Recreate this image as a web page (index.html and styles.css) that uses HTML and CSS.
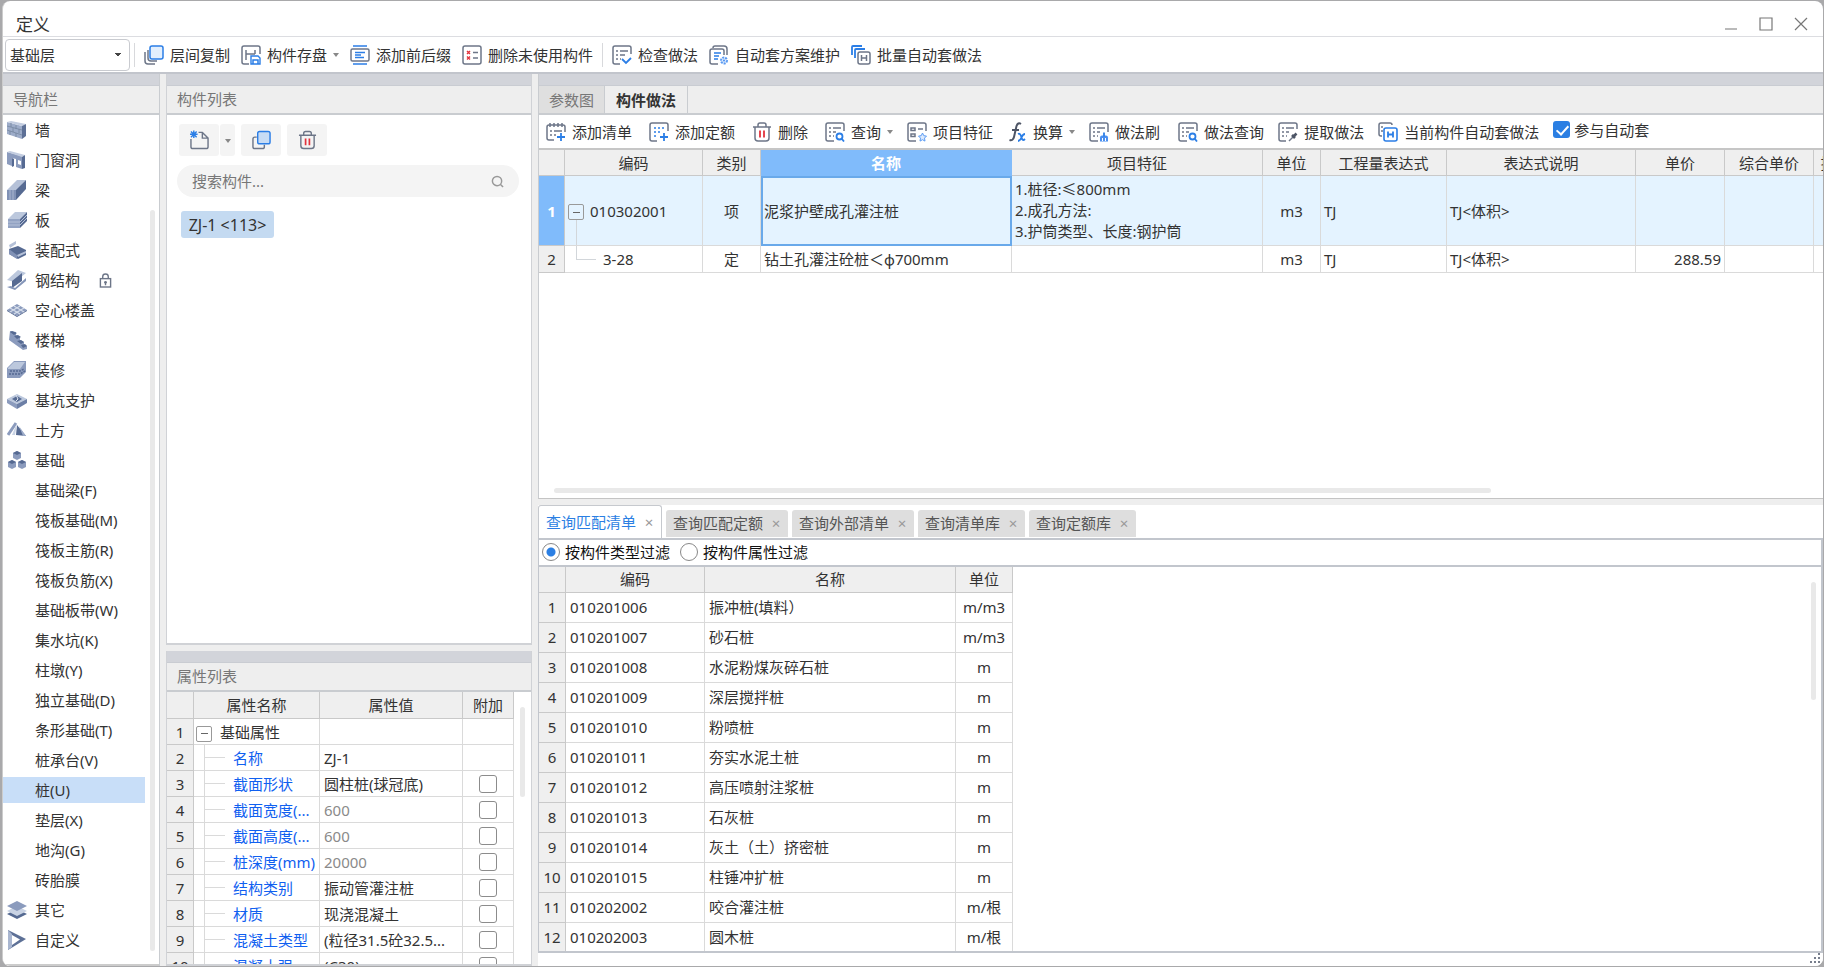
FILE: index.html
```html
<!DOCTYPE html>
<html lang="zh-CN">
<head>
<meta charset="utf-8">
<title>定义</title>
<link rel="stylesheet" href="styles.css">
</head>
<body>
<svg class="sprite" aria-hidden="true">
  <symbol id="i-layers" viewBox="0 0 20 20"><path d="M1 7v9q0 3 3 3h7M4 5v8q0 3 3 3h6" class="g"/><rect x="6" y="1" width="13" height="13" rx="2" fill="#e3effd" stroke="#2b7ee6" stroke-width="1.5"/></symbol>
  <symbol id="i-save" viewBox="0 0 20 20"><path d="M8 19H3q-2 0-2-2V3q0-2 2-2h14q2 0 2 2v6M5 5v10M5 9h9M14 5v4" class="g"/><path d="M10 11h7l2 2v6h-9z" fill="#fff" stroke="#2b7ee6" stroke-width="1.4"/><path d="M12 19v-4h5v4" class="b"/></symbol>
  <symbol id="i-affix" viewBox="0 0 20 20"><path d="M3 1h14M3 19h14" class="b"/><rect x="1" y="4" width="18" height="12" rx="1.5" class="g"/><path d="M5 7.500h10M5 10h6M5 12.500h9" class="b"/></symbol>
  <symbol id="i-unused" viewBox="0 0 20 20"><rect x="1" y="1" width="18" height="18" rx="2" class="g"/><path d="M5 6l3 3M8 6l-3 3M5 11.500l3 3M8 11.500l-3 3" class="r"/><path d="M11 7.500h5M11 13h5" class="g"/></symbol>
  <symbol id="i-check" viewBox="0 0 20 20"><path d="M8 19H3q-2 0-2-2V3q0-2 2-2h14q2 0 2 2v6M4 6h2M8 6h8M4 10h2M8 10h5M4 14h2M8 14h1" class="g"/><path d="M10 14l4 4 5-5" class="b2"/></symbol>
  <symbol id="i-plan" viewBox="0 0 20 20"><path d="M4 3q0-2 2-2h9q3 0 3 3v6M9 19H3q-2 0-2-2V6q0-2 2-2h10q2 0 2 2v4" class="g"/><path d="M5 8h7M5 11h5M5 14h4" class="b"/><circle cx="15" cy="15.500" r="3" fill="#dceafd" stroke="#5b9bf3" stroke-width="2" stroke-dasharray="2 1"/><circle cx="15" cy="15.500" r="1" fill="#4a8ff0"/></symbol>
  <symbol id="i-batch" viewBox="0 0 20 20"><path d="M1 10V2q0-1 1-1h9M4 13V5q0-1 1-1h9" class="b2"/><rect x="7" y="7" width="12" height="12" rx="2" class="g"/><path d="M10.500 10v6M15.500 10v6M10.500 13h5" class="g"/></symbol>
  <symbol id="i-addlist" viewBox="0 0 20 20"><path d="M8 18H3q-2 0-2-2V5q0-2 2-2h14q2 0 2 2v5M4 1v4M8 1v4M12 1v4M16 1v4M4 9h2M8 9h8M4 13h2M8 13h2" class="g"/><path d="M15 11v8M11 15h8" class="b2"/></symbol>
  <symbol id="i-addquota" viewBox="0 0 20 20"><path d="M8 19H3q-2 0-2-2V3q0-2 2-2h14q2 0 2 2v6" class="g"/><path d="M5 6h11M5 10h8M5 14h4" class="b" stroke-dasharray="2 2"/><path d="M15 11v8M11 15h8" class="b2"/></symbol>
  <symbol id="i-trash" viewBox="0 0 20 20"><path d="M1 5h18M3 5v11q0 3 3 3h8q3 0 3-3V5M6 5V3q0-2 2-2h4q2 0 2 2v2" class="g"/><path d="M8 8.500v7M12 8.500v7" class="r2"/></symbol>
  <symbol id="i-query" viewBox="0 0 20 20"><path d="M9 19H3q-2 0-2-2V3q0-2 2-2h14q2 0 2 2v6M4 6h2M8 6h8M4 10h2M8 10h3M4 14h2M8 14h1" class="g"/><circle cx="14.500" cy="14.500" r="3" class="b2"/><path d="M17 17l2 2.500" class="b2"/></symbol>
  <symbol id="i-feature" viewBox="0 0 20 20"><path d="M9 19H3q-2 0-2-2V3q0-2 2-2h14q2 0 2 2v6M4 6h4v2.500h-4zM4 12h4v2.500h-4zM11 7h5" class="g"/><path d="M15.500 11l1.300 2.700 2.700.4-2 2 .5 3-2.500-1.400-2.500 1.400.5-3-2-2 2.700-.4z" fill="#dceafd" stroke="#5b9bf3"/></symbol>
  <symbol id="i-fx" viewBox="0 0 18 20"><path d="M13 2q-3-2-4.500 2L6 15q-1 4-4.500 3M4 8h7" fill="none" stroke="#4d5566" stroke-width="2"/><path d="M10 12q2-1 3 2l1 3q1 2 3 0M17 12q-2 0-3.500 3.500T10 19" fill="none" stroke="#2b7ee6" stroke-width="1.800"/></symbol>
  <symbol id="i-brush" viewBox="0 0 20 20"><path d="M9 19H3q-2 0-2-2V3q0-2 2-2h14q2 0 2 2v7M4 6h2M8 6h8M4 10h2M8 10h3M4 14h2M8 14h1" class="g"/><path d="M11 19.500v-4q0-2 2-2h4q2 0 2 2v4z" fill="#4a8ff0"/><path d="M15 10.500v4" class="b2"/><path d="M13.500 16v3M16.500 16v3" stroke="#fff"/></symbol>
  <symbol id="i-extract" viewBox="0 0 20 20"><path d="M8 19H3q-2 0-2-2V3q0-2 2-2h14q2 0 2 2v4M4 6h2M8 6h8M4 10h2M8 10h3M4 14h2M8 14h1" class="g"/><path d="M11 19l5-5" class="g"/><path d="M14 13l3 3M15.500 14.500l3-3" stroke="#4d5566" stroke-width="2.600"/></symbol>
  <symbol id="i-current" viewBox="0 0 20 20"><path d="M4 14H3q-2 0-2-2V3q0-2 2-2h9q2 0 2 2M4 4v2M4 8v2" class="g"/><rect x="6" y="6" width="13" height="13" rx="2" fill="#fff" stroke="#2b7ee6" stroke-width="1.600"/><path d="M10 9.500v6M15 9.500v6M10 12.500h5" class="b2"/></symbol>
  <symbol id="i-new" viewBox="0 0 20 20"><path d="M9 2h4l6 6v9q0 2-2 2H3q-2 0-2-2V9M13 2v6h6" class="g"/><path d="M1 1l6 6M7 1L1 7M4 0v8M0 4h8" class="b"/></symbol>
  <symbol id="i-copy" viewBox="0 0 20 20"><path d="M5 7H3q-2 0-2 2v8q0 2 2 2h8q2 0 2-2v-2" class="g"/><rect x="6" y="1" width="13" height="13" rx="2" fill="#c7dcf5" stroke="#2b7ee6" stroke-width="1.5"/></symbol>
  <symbol id="i-search" viewBox="0 0 14 14"><circle cx="6.500" cy="6.500" r="5" fill="none" stroke="#999" stroke-width="1.600"/><path d="M10 10l3 3" stroke="#999" stroke-width="1.600"/></symbol>
  <symbol id="i-lock" viewBox="0 0 14 16"><rect x="1.500" y="6" width="11" height="9" class="g"/><path d="M4 6V4q0-3 3-3t3 3v2M7 10v3" class="g"/><circle cx="7" cy="10" r="1.500" fill="#6d7688"/></symbol>

  <symbol id="n-wall" viewBox="0 0 20 20"><path d="M0 2l15 4v13L0 14z" fill="#9dacc9"/><path d="M0 2l4-1 15 3-4 2z" fill="#c3cde0"/><path d="M15 6l4-2v12l-4 3z" fill="#5d7096"/><path d="M0 6l15 4M0 10l15 5M4 3v4M9 5v4M12 9v4M6 8v4M3 11v4M9 13v4" stroke="#75869f" stroke-width=".8"/></symbol>
  <symbol id="n-door" viewBox="0 0 20 20"><path d="M0 2l15 4v13l-6-2V9L5 8v8l-5-2z" fill="#8b9bbd"/><path d="M0 2l3-1 15 4-3 2z" fill="#c3cde0"/><path d="M15 7l3-2v13l-3 1zM5 8l2 1v7l-2 1z" fill="#566a92"/><path d="M11 10l3 1v4l-3-1z" fill="#fff"/></symbol>
  <symbol id="n-beam" viewBox="0 0 20 20"><path d="M0 10L10 0h9l-9 10z" fill="#b5c1d8"/><path d="M0 10h9v10H0z" fill="#8091b5"/><path d="M9 10L19 0v9L9 20z" fill="#566a92"/><path d="M3 10v10M6 10v10" stroke="#a9b6d0"/></symbol>
  <symbol id="n-slab" viewBox="0 0 20 20"><path d="M1 9l7-7h12l-7 7z" fill="#bcc8dd"/><path d="M1 9h12v9H1z" fill="#93a3c3"/><path d="M13 9l7-7v9l-7 7z" fill="#566a92"/><path d="M1 12h12l7-7M1 15h12l7-7" fill="none" stroke="#b5c1d8"/></symbol>
  <symbol id="n-prefab" viewBox="0 0 20 20"><path d="M2 9l9-3 8 4v5l-8 4-9-5z" fill="#566a92"/><path d="M2 5l7-4v3L3 8zM10 15l9-4v2l-8 4z" fill="#b5c1d8"/><path d="M2 9l8 6v4l-8-5z" fill="#8091b5"/></symbol>
  <symbol id="n-steel" viewBox="0 0 20 20"><path d="M0 10L11 0l8 3L8 12z" fill="#bcc8dd"/><path d="M5 11L15 3v8L5 18z" fill="#566a92"/><path d="M0 17l4-1 4 2L19 8v3L8 20z" fill="#8495b8"/></symbol>
  <symbol id="n-hollow" viewBox="0 0 20 20"><path d="M0 10l10-6 10 6-10 6z" fill="#8b9bbd"/><path d="M0 11l10 6 10-6v-1l-10 6L0 10z" fill="#566a92"/><path d="M3 8l10 6M7 6l10 6M17 8L7 14M13 6L3 12" stroke="#d6deeb" stroke-width="1.200"/></symbol>
  <symbol id="n-stair" viewBox="0 0 20 20"><path d="M3 1l6 1v3l4 2v3l4 2v3l3 1v3l-4 1L2 10z" fill="#8b9bbd"/><path d="M3 2l2-1 5 2-3 2zM7 6l4-1 3 2-4 2zM10 11l4-1 3 2-3 2zM14 15l4-1 2 2-4 2z" fill="#566a92"/></symbol>
  <symbol id="n-decor" viewBox="0 0 20 20"><path d="M0 8l7-7h12v11l-6 6H0z" fill="#8b9bbd"/><path d="M1 8l6-6h11l-5 7H1z" fill="#bcc8dd"/><path d="M3 11h10l4-2M2 14h11l5-3" fill="none" stroke="#566a92" stroke-dasharray="2 1" stroke-width="1.500"/></symbol>
  <symbol id="n-pit" viewBox="0 0 20 20"><path d="M0 9l10-5 10 5-10 5z" fill="#bcc8dd"/><path d="M5 9l5-3 5 3-5 3z" fill="#566a92"/><path d="M0 9l10 5v5L0 13z" fill="#8b9bbd"/><path d="M20 9l-10 5v5l10-6z" fill="#6c7fa6"/><path d="M9 5l2 4-2 2" fill="none" stroke="#dfe5f0"/></symbol>
  <symbol id="n-earth" viewBox="0 0 20 20"><path d="M1 15L9 3" stroke="#8b9bbd" stroke-width="3"/><path d="M9 15l1-10 9 11z" fill="#566a92"/><path d="M10 3L5 15h3z" fill="#c9d3e4"/><path d="M12 6l4 10h3z" fill="#9dacc9"/></symbol>
  <symbol id="n-found" viewBox="0 0 20 20"><path d="M6 3l4-2 4 2v5l-4 2-4-2zM1 12l4-2 4 2v5l-4 2-4-2zM11 12l4-2 4 2v5l-4 2-4-2z" fill="#8b9bbd"/><path d="M6 3l4-2 4 2-4 2zM1 12l4-2 4 2-4 2zM11 12l4-2 4 2-4 2z" fill="#566a92"/></symbol>
  <symbol id="n-other" viewBox="0 0 20 20"><path d="M0 14l10-5 10 5-10 5z" fill="#566a92"/><path d="M0 11l10-5 10 5-10 5z" fill="#c9d3e4"/><path d="M0 6l10-5 10 5-10 5z" fill="#8b9bbd"/></symbol>
  <symbol id="n-custom" viewBox="0 0 20 20"><path d="M1 0l18 9-18 11z" fill="#5d7096"/><path d="M1 0v20l4-3V4z" fill="#a9b6d0"/><path d="M5 5l8 4.500L5 15z" fill="#fff"/></symbol>
</svg>

<div class="window">
  <header class="titlebar">
    <h1>定义</h1>
    <div class="winbtns">
      <button aria-label="最小化"><svg viewBox="0 0 14 14"><path d="M1 12h12"/></svg></button>
      <button aria-label="最大化"><svg viewBox="0 0 14 14"><path d="M1 1h12v12H1z"/></svg></button>
      <button aria-label="关闭"><svg viewBox="0 0 14 14"><path d="M1 1l12 12M13 1L1 13"/></svg></button>
    </div>
  </header>

  <div class="toolbar main-tools">
    <select class="floor" aria-label="楼层"><option>基础层</option></select>
    <span class="sep"></span>
    <button class="tool"><svg><use href="#i-layers"/></svg>层间复制</button>
    <button class="tool"><svg><use href="#i-save"/></svg>构件存盘<i class="caret"></i></button>
    <button class="tool"><svg><use href="#i-affix"/></svg>添加前后缀</button>
    <button class="tool"><svg><use href="#i-unused"/></svg>删除未使用构件</button>
    <span class="sep"></span>
    <button class="tool"><svg><use href="#i-check"/></svg>检查做法</button>
    <button class="tool"><svg><use href="#i-plan"/></svg>自动套方案维护</button>
    <button class="tool"><svg><use href="#i-batch"/></svg>批量自动套做法</button>
  </div>

  <div class="workspace">
    <nav class="panel nav">
      <div class="band"></div>
      <h2 class="head">导航栏</h2>
      <div class="navbody">
        <ul>
          <li><svg><use href="#n-wall"/></svg><a href="#">墙</a></li>
          <li><svg><use href="#n-door"/></svg><a href="#">门窗洞</a></li>
          <li><svg><use href="#n-beam"/></svg><a href="#">梁</a></li>
          <li><svg><use href="#n-slab"/></svg><a href="#">板</a></li>
          <li><svg><use href="#n-prefab"/></svg><a href="#">装配式</a></li>
          <li><svg><use href="#n-steel"/></svg><a href="#">钢结构</a><svg class="lock"><use href="#i-lock"/></svg></li>
          <li><svg><use href="#n-hollow"/></svg><a href="#">空心楼盖</a></li>
          <li><svg><use href="#n-stair"/></svg><a href="#">楼梯</a></li>
          <li><svg><use href="#n-decor"/></svg><a href="#">装修</a></li>
          <li><svg><use href="#n-pit"/></svg><a href="#">基坑支护</a></li>
          <li><svg><use href="#n-earth"/></svg><a href="#">土方</a></li>
          <li><svg><use href="#n-found"/></svg><a href="#">基础</a></li>
          <li class="sub"><a href="#">基础梁(F)</a></li>
          <li class="sub"><a href="#">筏板基础(M)</a></li>
          <li class="sub"><a href="#">筏板主筋(R)</a></li>
          <li class="sub"><a href="#">筏板负筋(X)</a></li>
          <li class="sub"><a href="#">基础板带(W)</a></li>
          <li class="sub"><a href="#">集水坑(K)</a></li>
          <li class="sub"><a href="#">柱墩(Y)</a></li>
          <li class="sub"><a href="#">独立基础(D)</a></li>
          <li class="sub"><a href="#">条形基础(T)</a></li>
          <li class="sub"><a href="#">桩承台(V)</a></li>
          <li class="sub on"><a href="#">桩(U)</a></li>
          <li class="sub"><a href="#">垫层(X)</a></li>
          <li class="sub"><a href="#">地沟(G)</a></li>
          <li class="sub"><a href="#">砖胎膜</a></li>
          <li><svg><use href="#n-other"/></svg><a href="#">其它</a></li>
          <li><svg><use href="#n-custom"/></svg><a href="#">自定义</a></li>
        </ul>
        <div class="vtrack nav-track"></div>
      </div>
    </nav>

    <div class="middle">
      <section class="panel components">
        <div class="band"></div>
        <h2 class="head">构件列表</h2>
        <div class="compbody">
          <div class="compbtns">
            <div class="split"><button aria-label="新建"><svg><use href="#i-new"/></svg></button><button class="drop" aria-label="更多"><i class="caret"></i></button></div>
            <button aria-label="复制"><svg><use href="#i-copy"/></svg></button>
            <button aria-label="删除"><svg><use href="#i-trash"/></svg></button>
          </div>
          <div class="search"><input type="text" placeholder="搜索构件..." aria-label="搜索构件"><svg><use href="#i-search"/></svg></div>
          <button class="chip">ZJ-1 &lt;113&gt;</button>
        </div>
      </section>

      <section class="panel props">
        <div class="band"></div>
        <h2 class="head">属性列表</h2>
        <div class="propbody">
          <table class="grid proptable">
            <colgroup><col class="p0"><col class="p1"><col class="p2"><col class="p3"></colgroup>
            <thead><tr><th></th><th>属性名称</th><th>属性值</th><th>附加</th></tr></thead>
            <tbody>
              <tr><th>1</th><td class="root"><button class="exp" aria-label="折叠"></button>基础属性</td><td></td><td></td></tr>
              <tr><th>2</th><td class="leaf">名称</td><td>ZJ-1</td><td></td></tr>
              <tr><th>3</th><td class="leaf">截面形状</td><td>圆柱桩(球冠底)</td><td class="c"><input type="checkbox" aria-label="截面形状"></td></tr>
              <tr><th>4</th><td class="leaf">截面宽度(...</td><td class="dim">600</td><td class="c"><input type="checkbox" aria-label="截面宽度"></td></tr>
              <tr><th>5</th><td class="leaf">截面高度(...</td><td class="dim">600</td><td class="c"><input type="checkbox" aria-label="截面高度"></td></tr>
              <tr><th>6</th><td class="leaf">桩深度(mm)</td><td class="dim">20000</td><td class="c"><input type="checkbox" aria-label="桩深度"></td></tr>
              <tr><th>7</th><td class="leaf">结构类别</td><td>振动管灌注桩</td><td class="c"><input type="checkbox" aria-label="结构类别"></td></tr>
              <tr><th>8</th><td class="leaf">材质</td><td>现浇混凝土</td><td class="c"><input type="checkbox" aria-label="材质"></td></tr>
              <tr><th>9</th><td class="leaf">混凝土类型</td><td>(粒径31.5砼32.5...</td><td class="c"><input type="checkbox" aria-label="混凝土类型"></td></tr>
              <tr><th>10</th><td class="leaf">混凝土强...</td><td>(C30)</td><td class="c"><input type="checkbox" aria-label="混凝土强度"></td></tr>
            </tbody>
          </table>
          <div class="vtrack prop-track"></div>
        </div>
      </section>
    </div>

    <main class="right">
      <section class="panel upper">
        <div class="band"></div>
        <div class="tabs"><button>参数图</button><button class="on">构件做法</button></div>
        <div class="toolbar list-tools">
          <div class="group wide">
            <button class="tool"><svg><use href="#i-addlist"/></svg>添加清单</button>
            <button class="tool"><svg><use href="#i-addquota"/></svg>添加定额</button>
            <button class="tool"><svg><use href="#i-trash"/></svg>删除</button>
            <button class="tool"><svg><use href="#i-query"/></svg>查询<i class="caret"></i></button>
          </div>
          <div class="group">
            <button class="tool"><svg><use href="#i-feature"/></svg>项目特征</button>
            <button class="tool"><svg><use href="#i-fx"/></svg>换算<i class="caret"></i></button>
            <button class="tool"><svg><use href="#i-brush"/></svg>做法刷</button>
          </div>
          <div class="group">
            <button class="tool"><svg><use href="#i-query"/></svg>做法查询</button>
            <button class="tool"><svg><use href="#i-extract"/></svg>提取做法</button>
            <button class="tool"><svg><use href="#i-current"/></svg>当前构件自动套做法</button>
            <label class="auto"><input type="checkbox" checked>参与自动套</label>
          </div>
        </div>
        <div class="upperbody">
          <table class="grid costtable">
            <colgroup><col class="c0"><col class="c1"><col class="c2"><col class="c3"><col class="c3"><col class="c2"><col class="c6"><col class="c7"><col class="c8"><col class="c8"><col class="c10"></colgroup>
            <thead><tr><th></th><th>编码</th><th>类别</th><th class="sel">名称</th><th>项目特征</th><th>单位</th><th>工程量表达式</th><th>表达式说明</th><th>单价</th><th>综合单价</th><th>措施项目</th></tr></thead>
            <tbody>
              <tr class="cur"><th>1</th><td class="code"><button class="exp" aria-label="折叠"></button>010302001</td><td class="c">项</td><td class="cell">泥浆护壁成孔灌注桩</td><td class="multi">1.桩径:≤800mm<br>2.成孔方法:<br>3.护筒类型、长度:钢护筒</td><td class="c">m3</td><td>TJ</td><td>TJ&lt;体积&gt;</td><td></td><td></td><td></td></tr>
              <tr><th>2</th><td class="child">3-28</td><td class="c">定</td><td>钻土孔灌注砼桩＜φ700mm</td><td></td><td class="c">m3</td><td>TJ</td><td>TJ&lt;体积&gt;</td><td class="num">288.59</td><td></td><td></td></tr>
            </tbody>
          </table>
          <div class="htrack"></div>
        </div>
      </section>

      <section class="lower">
        <div class="qtabs">
          <div class="qtab on"><button>查询匹配清单</button><button class="x" aria-label="关闭">×</button></div>
          <div class="qtab"><button>查询匹配定额</button><button class="x" aria-label="关闭">×</button></div>
          <div class="qtab"><button>查询外部清单</button><button class="x" aria-label="关闭">×</button></div>
          <div class="qtab"><button>查询清单库</button><button class="x" aria-label="关闭">×</button></div>
          <div class="qtab"><button>查询定额库</button><button class="x" aria-label="关闭">×</button></div>
        </div>
        <div class="qbox">
          <div class="filters">
            <label><input type="radio" name="filter" checked>按构件类型过滤</label>
            <label><input type="radio" name="filter">按构件属性过滤</label>
          </div>
          <div class="qbody">
            <table class="grid qtable">
              <colgroup><col class="q0"><col class="q1"><col class="q2"><col class="q3"></colgroup>
              <thead><tr><th></th><th>编码</th><th>名称</th><th>单位</th></tr></thead>
              <tbody>
                <tr><th>1</th><td>010201006</td><td>振冲桩(填料）</td><td class="c">m/m3</td></tr>
                <tr><th>2</th><td>010201007</td><td>砂石桩</td><td class="c">m/m3</td></tr>
                <tr><th>3</th><td>010201008</td><td>水泥粉煤灰碎石桩</td><td class="c">m</td></tr>
                <tr><th>4</th><td>010201009</td><td>深层搅拌桩</td><td class="c">m</td></tr>
                <tr><th>5</th><td>010201010</td><td>粉喷桩</td><td class="c">m</td></tr>
                <tr><th>6</th><td>010201011</td><td>夯实水泥土桩</td><td class="c">m</td></tr>
                <tr><th>7</th><td>010201012</td><td>高压喷射注浆桩</td><td class="c">m</td></tr>
                <tr><th>8</th><td>010201013</td><td>石灰桩</td><td class="c">m</td></tr>
                <tr><th>9</th><td>010201014</td><td>灰土（土）挤密桩</td><td class="c">m</td></tr>
                <tr><th>10</th><td>010201015</td><td>柱锤冲扩桩</td><td class="c">m</td></tr>
                <tr><th>11</th><td>010202002</td><td>咬合灌注桩</td><td class="c">m/根</td></tr>
                <tr><th>12</th><td>010202003</td><td>圆木桩</td><td class="c">m/根</td></tr>
              </tbody>
            </table>
            <div class="vtrack q-track"></div>
          </div>
        </div>
        <footer class="status"><svg viewBox="0 0 12 12"><path d="M9 0h2v2H9zM9 4h2v2H9zM5 4h2v2H5zM9 8h2v2H9zM5 8h2v2H5zM1 8h2v2H1z"/></svg></footer>
      </section>
    </main>
  </div>
</div>
</body>
</html>
```

FILE: styles.css
```css
* { box-sizing: border-box; }

body {
  margin: 0;
  height: 100vh;
  padding: 1px 1px 1px 2px;
  background: #a9a9ab;
  overflow: hidden;
  font: 15px/20px "Noto Sans", "Noto Sans CJK SC", sans-serif;
  color: #333;
}

.sprite { position: absolute; width: 0; height: 0; }
.g { fill: none; stroke: #6d7688; stroke-width: 1.5; }
.b { fill: none; stroke: #2b7ee6; stroke-width: 1.5; }
.b2 { fill: none; stroke: #2b7ee6; stroke-width: 1.8; }
.r { fill: none; stroke: #e2323c; stroke-width: 1.4; }
.r2 { fill: none; stroke: #e2323c; stroke-width: 1.8; }

button, input, select { font: inherit; color: inherit; }
button { border: 0; padding: 0; background: none; white-space: nowrap; }
h1, h2 { margin: 0; font-weight: 400; }
a { color: inherit; text-decoration: none; }

.window {
  height: 100%;
  display: flex;
  flex-direction: column;
  background: #fff;
  border-left: 1px solid #ccc;
  border-radius: 8px;
  overflow: hidden;
}

/* title bar */
.titlebar {
  flex: none;
  height: 36px;
  display: flex;
  align-items: flex-end;
  justify-content: space-between;
  padding: 0 15px 0 13px;
  border-bottom: 1px solid #dcdde1;
}
.titlebar h1 { font-size: 17px; line-height: 22px; }
.winbtns { display: flex; gap: 21px; padding-bottom: 5px; }
.winbtns svg { display: block; width: 14px; height: 14px; fill: none; stroke: #777; stroke-width: 1.2; }

/* toolbars */
.toolbar { flex: none; display: flex; align-items: center; }
.main-tools { height: 37px; padding: 1px 0 0 2px; gap: 11px; border-bottom: 2px solid #c2c5cc; }
.tool { display: flex; align-items: center; gap: 6px; }
.tool svg { width: 20px; height: 20px; }
.caret {
  width: 0;
  height: 0;
  margin: 0;
  border: 3px solid transparent;
  border-top: 4px solid #888;
  border-bottom: 0;
}
.sep { width: 1px; height: 24px; margin: 0 -2px; background: #d8d9dc; }
.floor {
  width: 125px;
  height: 32px;
  margin-right: -5px;
  padding: 0 10px 0 4px;
  appearance: none;
  border: 1px solid #c9cbd0;
  border-radius: 4px;
  background:
    linear-gradient(to bottom right, #444 50%, transparent 50%) right 7px center / 4px 4px no-repeat,
    linear-gradient(to bottom left, #444 50%, transparent 50%) right 11px center / 4px 4px no-repeat,
    #fff;
}

.workspace { flex: 1; min-height: 0; display: flex; gap: 6px; background: #eee; }

.panel { display: flex; flex-direction: column; min-height: 0; }
.band { flex: none; height: 12px; background: #d2d4da; border-bottom: 1px solid #c9ccd2; }
.head {
  flex: none;
  height: 29px;
  padding-left: 10px;
  font-size: 15px;
  line-height: 26px;
  color: #777;
  background: #eee;
  border-bottom: 2px solid #c9ccd0;
}

.vtrack { width: 5px; border-radius: 3px; background: #e9e9e9; }

/* navigation */
.nav { width: 157px; border-right: 1px solid #c9ccd0; }
.navbody { flex: 1; min-height: 0; display: flex; background: #fff; border-bottom: 2px solid #ccc; }
.nav ul { width: 142px; margin: 0; padding: 0; list-style: none; }
.nav li { display: flex; align-items: center; height: 26px; margin: 2px 0 4px; padding-left: 4px; gap: 8px; }
.nav li svg { width: 20px; height: 20px; }
.nav li .lock { width: 13px; height: 15px; margin-left: 11px; }
.nav .sub { padding-left: 32px; }
.nav .on { background: #c8def8; }
.nav-track { margin: 95px 0 13px 5px; }

/* middle column */
.middle { width: 366px; display: flex; flex-direction: column; gap: 6px; }
.components { flex: 572 1 0; border: solid #d0d2d6; border-width: 0 1px 2px; background: #fff; }
.compbody { padding: 9px 12px 0 10px; }
.compbtns { display: flex; gap: 6px; padding-left: 2px; }
.compbtns button { width: 40px; height: 32px; border-radius: 3px; background: #f4f4f4; }
.compbtns button svg { display: block; width: 19px; height: 20px; margin: auto; }
.compbtns .drop { width: 15px; }
.compbtns .drop .caret { display: block; margin: 2px auto 0; }
.split { display: flex; gap: 1px; }
.search {
  display: flex;
  align-items: center;
  height: 32px;
  margin-top: 9px;
  padding: 0 15px;
  border-radius: 16px;
  background: #f4f4f4;
}
.search input { flex: 1; min-width: 0; padding: 0; border: 0; outline: 0; background: none; }
.search input::placeholder { color: #777; opacity: 1; }
.search svg { width: 13px; height: 13px; }
.chip {
  margin: 14px 0 0 4px;
  width: 93px;
  height: 27px;
  border-radius: 3px;
  background: #c4daf1;
  font-size: 16px;
}

.props { flex: 314 1 0; border: solid #d0d2d6; border-width: 0 1px 2px; }
.propbody { flex: 1; min-height: 0; overflow: hidden; display: flex; align-items: flex-start; background: #fff; }
.prop-track { height: 90px; margin: 15px 0 0 6px; }

/* tables */
.grid { table-layout: fixed; border-collapse: separate; border-spacing: 0; }
.grid th, .grid td {
  padding: 0 4px;
  border: solid #dadada;
  border-width: 0 1px 1px 0;
  font-weight: 400;
  white-space: nowrap;
  text-align: left;
  overflow: hidden;
}
.grid th { padding: 0; background: #efefef; border-color: #c9c9c9; text-align: center; }
.grid .c { padding: 0; text-align: center; }
.grid .num { text-align: right; padding-right: 3px; }
.exp {
  position: relative;
  flex: none;
  width: 16px;
  height: 16px;
  border: 1px solid #999;
  border-radius: 2px;
  background: linear-gradient(#666, #666) center / 7px 1px no-repeat;
  vertical-align: middle;
}

.proptable { width: 347px; }
.proptable tr { height: 26px; }
.proptable thead tr { height: 27px; }
.p0 { width: 27px; }
.p1 { width: 126px; }
.p2 { width: 143px; }
.p3 { width: 51px; }
.proptable .root { padding-left: 2px; }
.proptable .exp { margin-right: 8px; }
.proptable .leaf {
  padding-left: 39px;
  padding-right: 0;
  color: #1060f0;
  background:
    linear-gradient(#dadada, #dadada) 10px 0 / 1px 100% no-repeat,
    linear-gradient(#dadada, #dadada) 11px 50% / 20px 1px no-repeat;
}
.dim { color: #8a8a8a; }
.proptable input {
  appearance: none;
  display: block;
  width: 18px;
  height: 18px;
  margin: auto;
  border: 1px solid #8c8c8c;
  border-radius: 3px;
  background: #fff;
}

/* right side */
.right { flex: 1; min-width: 0; display: flex; flex-direction: column; gap: 6px; }
.upper { flex: 424 1 0; background: #fff; border-left: 1px solid #c9ccd0; border-bottom: 1px solid #c4c4c4; }
.tabs { flex: none; display: flex; height: 29px; background: #eee; border-bottom: 2px solid #c9ccd0; }
.tabs button { padding: 0 10px; background: #dfdfdf; color: #777; border-right: 1px solid #c9ccd0; }
.tabs .on { padding: 0 11px; background: #eee; color: #333; font-weight: 700; }
.list-tools { height: 35px; padding-left: 7px; gap: 14px; border-bottom: 2px solid #c6c6c6; }
.group { display: flex; align-items: center; gap: 14px; }
.group.wide { gap: 17px; }
.group:last-child { margin-left: 4px; }
.auto { display: flex; align-items: center; gap: 4px; margin-bottom: 4px; white-space: nowrap; }
.auto input {
  appearance: none;
  position: relative;
  width: 17px;
  height: 17px;
  margin: 0;
  border-radius: 3px;
  background: #2b7fe3;
}
.auto input::after {
  content: "";
  position: absolute;
  left: 6px;
  top: 2px;
  width: 5px;
  height: 10px;
  border: solid #fff;
  border-width: 0 2px 2px 0;
  transform: rotate(42deg);
}
.upperbody { flex: 1; min-height: 0; display: flex; flex-direction: column; justify-content: space-between; overflow: hidden; }
.htrack { height: 5px; width: 73%; margin: 0 0 5px 15px; border-radius: 3px; background: #e9e9e9; }

.costtable { width: 1349px; }
.c0 { width: 26px; }
.c1 { width: 138px; }
.c2 { width: 58px; }
.c3 { width: 251px; }
.c6 { width: 126px; }
.c7 { width: 189px; }
.c8 { width: 89px; }
.c10 { width: 74px; }
.costtable thead tr { height: 26px; }
.costtable tbody tr { height: 27px; }
.costtable td { padding-left: 3px; }
.costtable .cur { height: 70px; }
.cur td { background: #e4f3ff; }
.costtable .sel { background: #80bbfb; border-color: #80bbfb; color: #fff; font-weight: 700; }
.costtable .cur th { background: #80bbfb; color: #fff; font-weight: 700; }
.costtable .cur .cell { border: 2px solid #69a9ea; padding-left: 1px; }
.costtable .multi { line-height: 21px; }
.costtable .code {
  background: linear-gradient(#d2d6da, #d2d6da) 11px 100% / 1px 26px no-repeat, #e4f3ff;
}
.code .exp { margin-right: 6px; }
.costtable .child {
  padding-left: 38px;
  background:
    linear-gradient(#d2d6da, #d2d6da) 11px 0 / 1px 13px no-repeat,
    linear-gradient(#d2d6da, #d2d6da) 11px 13px / 20px 1px no-repeat;
}

.lower { flex: 462 1 0; min-height: 0; display: flex; flex-direction: column; background: #fff; }
.qtabs { flex: none; display: flex; align-items: flex-end; gap: 4px; height: 33px; }
.qtab {
  display: flex;
  align-items: center;
  gap: 8px;
  height: 27px;
  margin-bottom: 1px;
  padding: 0 7px;
  border-radius: 3px 3px 0 0;
  background: #dedede;
  color: #555;
}
.qtab.on { height: 33px; margin-bottom: 0; background: #fff; color: #2b7fe3; border: 1px solid #c6c9ce; border-bottom: 0; }
.qtab .x { width: 10px; color: #999; }
.qbox {
  flex: 1;
  min-height: 0;
  display: flex;
  flex-direction: column;
  border: 2px solid #c2c6cd;
  border-left-width: 1px;
}
.filters { flex: none; display: flex; align-items: center; gap: 10px; height: 27px; padding-left: 3px; border-bottom: 2px solid #c2c6cd; color: #111; }
.filters label { display: flex; align-items: center; gap: 5px; }
.filters input {
  appearance: none;
  width: 18px;
  height: 18px;
  margin: 0;
  border: 1px solid #888;
  border-radius: 50%;
}
.filters input:checked { background: radial-gradient(circle, #2b7fe3 4px, #fff 5px); }
.qbody { flex: 1; min-height: 0; overflow: hidden; display: flex; align-items: flex-start; justify-content: space-between; }
.qtable { width: 474px; }
.qtable thead tr { height: 26px; }
.qtable tbody tr { height: 30px; }
.q0 { width: 27px; }
.q1 { width: 139px; }
.q2 { width: 251px; }
.q3 { width: 57px; }
.q-track { height: 118px; margin: 15px 5px 0 0; }
.status { flex: none; display: flex; justify-content: flex-end; height: 13px; padding-right: 2px; }
.status svg { width: 12px; height: 12px; fill: #777e8c; }
```
